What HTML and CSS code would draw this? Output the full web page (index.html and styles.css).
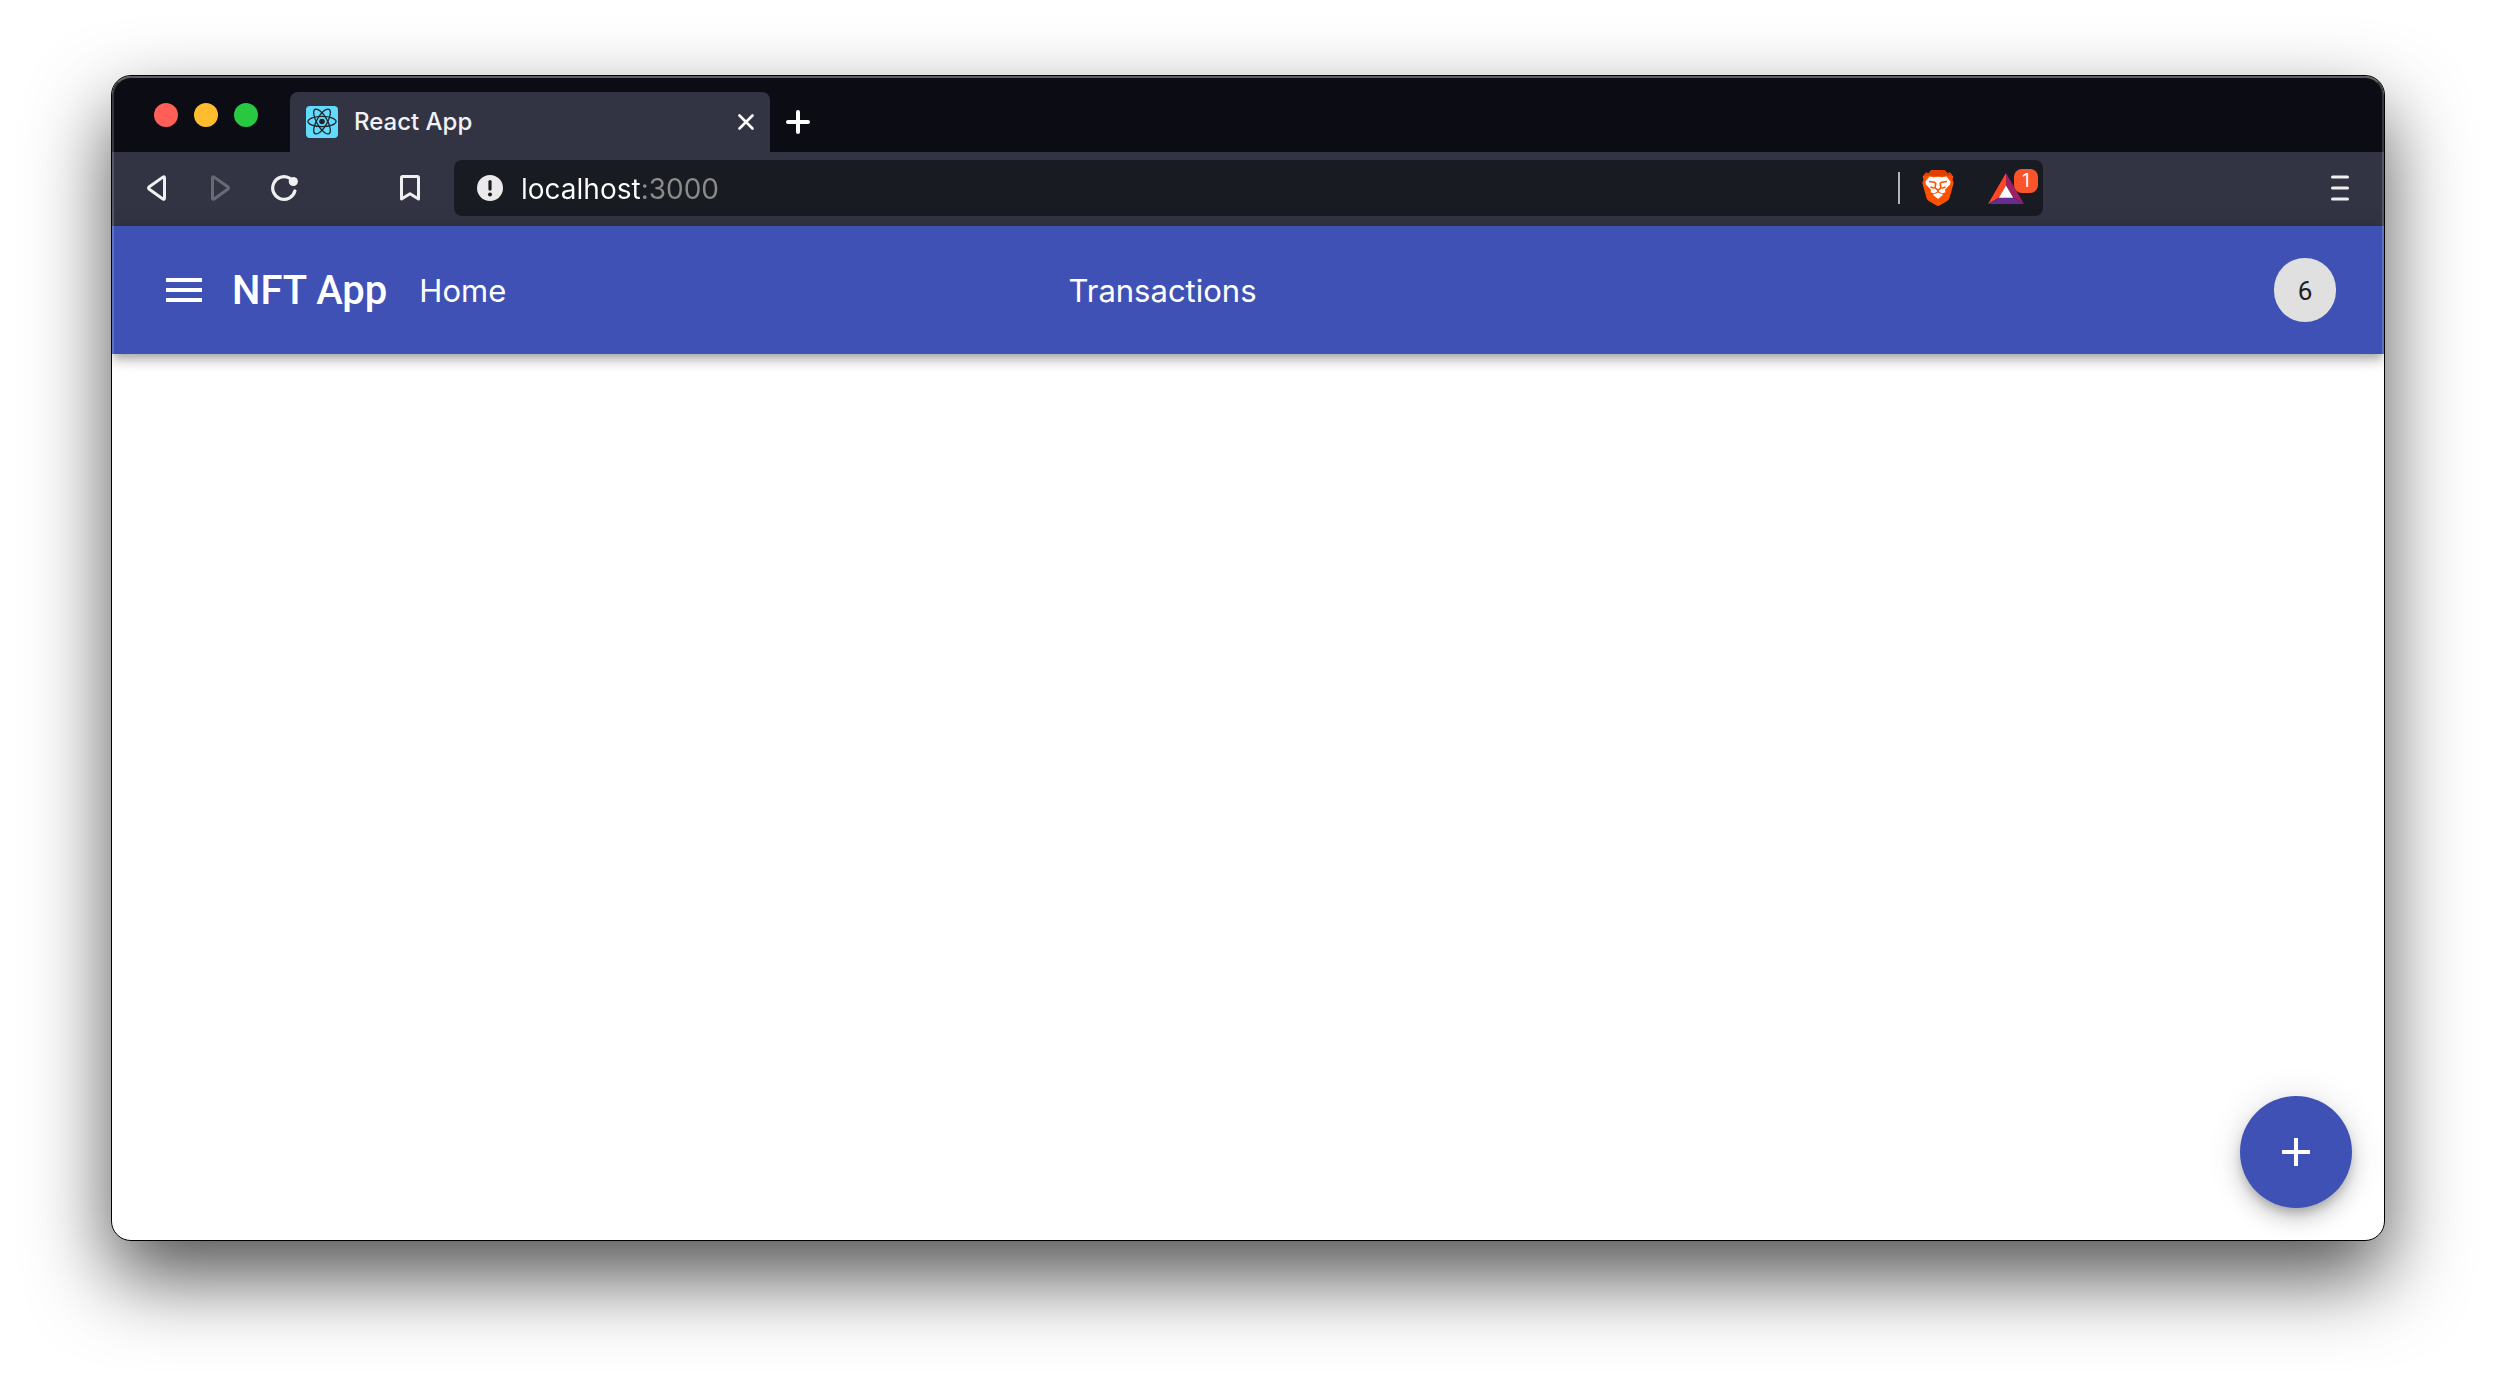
FILE: index.html
```html
<!DOCTYPE html>
<html lang="en">
<head>
<meta charset="utf-8">
<meta name="viewport" content="width=device-width, initial-scale=1">
<title>React App</title>
<link rel="stylesheet" href="styles.css">
</head>
<body>
<div class="window">
  <div class="tab-strip">
    <div class="lights">
      <button class="light light-close" aria-label="Close window"></button>
      <button class="light light-min" aria-label="Minimize window"></button>
      <button class="light light-max" aria-label="Zoom window"></button>
    </div>
    <div class="tab">
      <svg class="favicon" viewBox="0 0 32 32" aria-hidden="true">
        <rect width="32" height="32" rx="4" fill="#61dafb"/>
        <g fill="none" stroke="#20232a" stroke-width="1.3">
          <ellipse cx="16" cy="15.5" rx="14" ry="5.2"/>
          <ellipse cx="16" cy="15.5" rx="14" ry="5.2" transform="rotate(60 16 15.5)"/>
          <ellipse cx="16" cy="15.5" rx="14" ry="5.2" transform="rotate(120 16 15.5)"/>
        </g>
        <circle cx="16" cy="15.5" r="2.8" fill="#20232a"/>
      </svg>
      <span class="tab-title">React App</span>
      <button class="icon-button" aria-label="Close tab">
        <svg width="16" height="16" viewBox="0 0 16 16"><path d="M1.500 1.500l13 13M14.500 1.500l-13 13" stroke="#fff" stroke-width="2.600" stroke-linecap="round"/></svg>
      </button>
    </div>
    <button class="icon-button new-tab" aria-label="New tab">
      <svg width="24" height="24" viewBox="0 0 24 24"><path d="M12 2v20M2 12h20" stroke="#fff" stroke-width="4" stroke-linecap="round"/></svg>
    </button>
  </div>

  <div class="toolbar">
    <div class="history">
      <button class="icon-button" aria-label="Back">
        <svg width="28" height="28" viewBox="0 0 28 28"><path d="M22.5 4v20q0 2-1.600.9L7.300 15.200q-1.600-1.200 0-2.400L20.900 3.100q1.600-1.100 1.600.9z" fill="none" stroke="#f0f0f0" stroke-width="3"/></svg>
      </button>
      <button class="icon-button" aria-label="Forward" disabled>
        <svg width="28" height="28" viewBox="0 0 28 28"><path d="M6.500 4v20q0 2 1.600.9L21.700 15.200q1.600-1.200 0-2.400L8.100 3.100Q6.500 2 6.500 4z" fill="none" stroke="#686a75" stroke-width="3"/></svg>
      </button>
      <button class="icon-button" aria-label="Reload">
        <svg width="28" height="28" viewBox="0 0 28 28"><path d="M19.500 4.200A11.300 11.300 0 1 0 24.900 17" fill="none" stroke="#f0f0f0" stroke-width="3.200" stroke-linecap="round"/><circle cx="23.300" cy="7.500" r="4.600" fill="#f0f0f0"/></svg>
      </button>
    </div>
    <button class="icon-button" aria-label="Bookmark this page">
      <svg width="28" height="28" viewBox="0 0 28 28"><path d="M5.500 3.700q0-1.200 1.200-1.200h14.600q1.200 0 1.200 1.200v21.300L14 19.700 5.500 25z" fill="none" stroke="#f0f0f0" stroke-width="3" stroke-linejoin="round"/></svg>
    </button>
    <div class="address">
      <svg width="26" height="26" viewBox="0 0 26 26" aria-hidden="true"><circle cx="13" cy="13" r="13" fill="#eaeaea"/><path d="M13 6.500v7.600" stroke="#181b22" stroke-width="3.200" stroke-linecap="round"/><circle cx="13" cy="19.500" r="2" fill="#181b22"/></svg>
      <input class="url" type="text" aria-label="Address" value="localhost:3000">
      <span class="divider"></span>
      <button class="icon-button shields" aria-label="Brave Shields">
        <svg width="32" height="36" viewBox="0 0 32 36">
          <path d="M9.500 0h13l3 3.200 2.600-.7 3.300 4.300-.9 2.700 1.200 3.500L27.500 28q-.6 2-2.300 3.100L17.500 35.500q-1.500.9-3 0L6.800 31.100Q5.100 30 4.500 28L.3 13l1.200-3.500-.9-2.700 3.300-4.300 2.600.7z" fill="#ff5000"/>
          <path d="M9.500 0h13l3 3.200 2.600-.7 2.400 3.200-7.200-.2L16 6l-7.300-.5-7.200.2 2.400-3.200 2.600.7z" fill="#e03f00"/>
          <path d="M7.500 6.500l4.500.8L16 6.800l4 .5 4.500-.8 4 5-.4 3-5.200 5.200.6 2.500-3.500 1.300L16 21l-4 2.500-3.500-1.300.6-2.500-5.200-5.200-.4-3z" fill="#fff"/>
          <path d="M7 11.500l5.500.7 1.300 1.300-.8 4.500 3 2.300 3-2.300-.8-4.500 1.300-1.300 5.500-.7M8.500 17l3.500 1.200M23.500 17L20 18.200M16 20v2" fill="none" stroke="#ff5000" stroke-width="1.600"/>
          <path d="M16 22.600l5.200 2.200-5.200 4.200-5.200-4.200z" fill="#fff"/>
        </svg>
      </button>
      <button class="icon-button rewards" aria-label="Brave Rewards">
        <svg width="36" height="31" viewBox="0 0 36 31">
          <path d="M18 0v12.500L11 24.500 0 31z" fill="#ff4724"/>
          <path d="M18 0l18 31-11-6.500-7-12z" fill="#9e1f63"/>
          <path d="M0 31l11-6.500h14L36 31z" fill="#662d91"/>
          <path d="M18 12.500l7.200 12.200H10.800z" fill="#fff"/>
        </svg>
        <span class="badge">1</span>
      </button>
    </div>
    <button class="icon-button menu" aria-label="Browser menu">
      <svg width="18" height="26" viewBox="0 0 18 26"><path d="M1.500 2h15M1.500 13h15M1.500 24h15" stroke="#f0f0f0" stroke-width="3" stroke-linecap="round"/></svg>
    </button>
  </div>

  <header class="app-bar">
    <button class="icon-button" aria-label="Open navigation">
      <svg width="48" height="48" viewBox="0 0 24 24" fill="#fff"><path d="M3 18h18v-2H3v2zm0-5h18v-2H3v2zm0-7v2h18V6H3z"/></svg>
    </button>
    <h1 class="brand">NFT App</h1>
    <nav class="nav">
      <a href="#home">Home</a>
      <a href="#transactions">Transactions</a>
    </nav>
    <span class="count">6</span>
  </header>

  <main class="content">
    <button class="fab" aria-label="Add">
      <svg width="48" height="48" viewBox="0 0 24 24" fill="#fff"><path d="M19 13h-6v6h-2v-6H5v-2h6V5h2v6h6v2z"/></svg>
    </button>
  </main>
</div>
</body>
</html>
```
FILE: styles.css
```css
* { box-sizing: border-box; }

body {
  display: flex;
  min-height: 100vh;
  margin: 0;
  padding: 75px 111px 147px;
  background: #fff;
  font-family: Inter, "Liberation Sans", sans-serif;
}

button {
  padding: 0;
  border: 0;
  background: none;
  font: inherit;
}

svg { display: block; }

.window {
  position: relative;
  display: flex;
  flex: 1;
  flex-direction: column;
  overflow: hidden;
  border: 1px solid #000;
  border-radius: 20px;
  background: #fff;
  box-shadow: 0 36px 80px rgba(0, 0, 0, 0.68);
}

/* light bevel along the inside of the frame */
.window::after {
  content: "";
  position: absolute;
  inset: 0;
  z-index: 2;
  border: 2px solid rgba(255, 255, 255, 0.18);
  border-top-color: rgba(255, 255, 255, 0.34);
  border-radius: 19px;
  pointer-events: none;
}

.icon-button {
  display: flex;
  flex: none;
  align-items: center;
  justify-content: center;
}

.tab-strip {
  display: flex;
  align-items: flex-end;
  height: 76px;
  padding-left: 42px;
  background: #0c0c15;
}

.lights {
  display: flex;
  gap: 16px;
  width: 136px;
  padding-bottom: 25px;
}

.light {
  width: 24px;
  height: 24px;
  border-radius: 50%;
}

.light-close { background: #ff5f57; }
.light-min { background: #febc2e; }
.light-max { background: #28c840; }

.tab {
  display: flex;
  align-items: center;
  gap: 16px;
  width: 480px;
  height: 60px;
  padding: 0 16px;
  border-radius: 8px 8px 0 0;
  background: #323443;
}

.favicon {
  width: 32px;
  height: 32px;
}

.tab-title {
  flex: 1;
  color: #f2f2f4;
  font-size: 24px;
  font-weight: 500;
  line-height: 32px;
}

.new-tab {
  height: 60px;
  margin-left: 16px;
}

.toolbar {
  display: flex;
  align-items: center;
  height: 74px;
  padding: 0 35px 2px 30px;
  background: #323443;
}

.history {
  display: flex;
  gap: 36px;
  margin-right: 98px;
}

.address {
  display: flex;
  flex: none;
  align-items: center;
  width: 72%;
  height: 56px;
  margin-left: 30px;
  padding: 0 19px 0 23px;
  border-radius: 8px;
  background: #181b22;
}

/* host in white, port in grey */
.url {
  flex: 1;
  min-width: 0;
  height: 40px;
  margin-left: 18px;
  padding: 2px 0 0;
  border: 0;
  outline: 0;
  background: linear-gradient(90deg, #fff 119px, #8b8b8b 119px);
  -webkit-background-clip: text;
  background-clip: text;
  color: transparent;
  font: 400 28px/36px Inter, "Liberation Sans", sans-serif;
}

.divider {
  width: 2px;
  height: 32px;
  background: #b4b5b7;
}

.shields { margin-left: 22px; }

.rewards {
  position: relative;
  margin-left: 34px;
}

.badge {
  position: absolute;
  top: -4px;
  right: -14px;
  width: 24px;
  height: 24px;
  border-radius: 8px;
  background: #fb542b;
  color: #fff;
  font-size: 18px;
  line-height: 24px;
  text-align: center;
}

.menu { margin-left: auto; }

.app-bar {
  position: relative;
  display: flex;
  align-items: center;
  height: 128px;
  padding: 0 48px;
  background: #3f51b5;
  color: #fff;
  box-shadow:
    0 4px 8px -2px rgba(0, 0, 0, 0.2),
    0 8px 10px 0 rgba(0, 0, 0, 0.14),
    0 2px 20px 0 rgba(0, 0, 0, 0.12);
}

.brand {
  margin: 0 32px 0 24px;
  padding-top: 2px;
  font: 500 40px/64px Roboto, "Liberation Sans", sans-serif;
}

.nav {
  display: grid;
  flex: 1;
  grid-template-columns: 35% 1fr;
  padding-top: 2px;
  font-size: 31px;
  font-weight: 400;
  line-height: 48px;
}

.nav a {
  color: inherit;
  text-decoration: none;
}

.count {
  width: 62px;
  height: 64px;
  border-radius: 32px;
  background: #e0e0e0;
  color: #212121;
  font: 400 26px/66px Roboto, "Liberation Sans", sans-serif;
  text-align: center;
}

.content {
  display: flex;
  flex: 1;
  align-items: flex-end;
  justify-content: flex-end;
  padding: 32px;
}

.fab {
  display: flex;
  align-items: center;
  justify-content: center;
  width: 112px;
  height: 112px;
  border-radius: 50%;
  background: #3f51b5;
  box-shadow:
    0 6px 10px -2px rgba(0, 0, 0, 0.2),
    0 12px 20px 0 rgba(0, 0, 0, 0.14),
    0 2px 36px 0 rgba(0, 0, 0, 0.12);
}
```
